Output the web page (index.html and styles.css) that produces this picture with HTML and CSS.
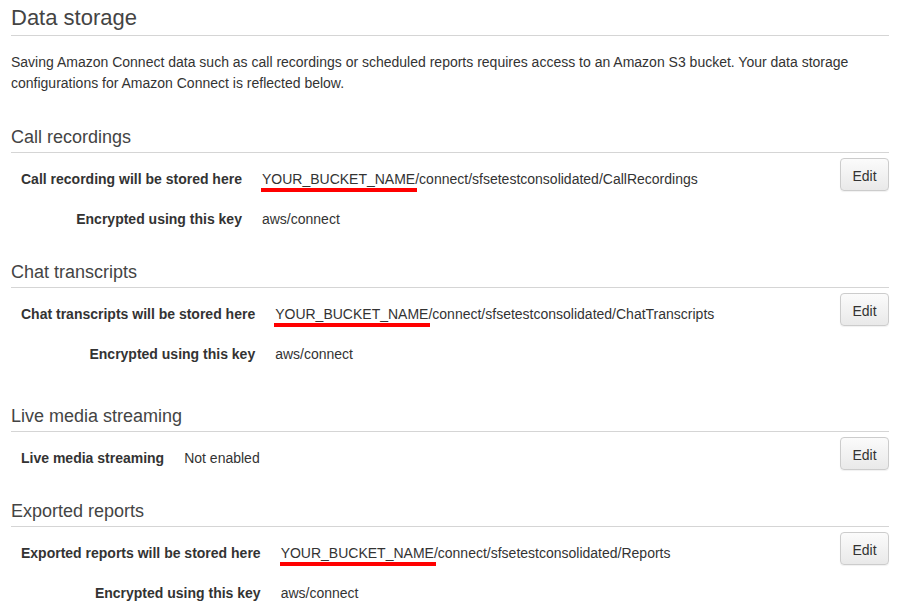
FILE: index.html
```html
<!DOCTYPE html>
<html lang="en">
<head>
<meta charset="utf-8">
<title>Data storage</title>
<link rel="stylesheet" href="styles.css">
</head>
<body>
<main class="page">
  <h1 class="page-title">Data storage</h1>
  <p class="intro">Saving Amazon Connect data such as call recordings or scheduled reports requires access to an Amazon S3 bucket. Your data storage configurations for Amazon Connect is reflected below.</p>

  <section class="section">
    <h2 class="section-title">Call recordings</h2>
    <div class="section-body">
      <div class="fields">
        <div class="label">Call recording will be stored here</div>
        <div class="value"><span class="mark">YOUR_BUCKET_NAME</span>/connect/sfsetestconsolidated/CallRecordings</div>
        <div class="label">Encrypted using this key</div>
        <div class="value">aws/connect</div>
      </div>
      <button class="btn" type="button">Edit</button>
    </div>
  </section>

  <section class="section section-spaced">
    <h2 class="section-title">Chat transcripts</h2>
    <div class="section-body">
      <div class="fields">
        <div class="label">Chat transcripts will be stored here</div>
        <div class="value"><span class="mark">YOUR_BUCKET_NAME</span>/connect/sfsetestconsolidated/ChatTranscripts</div>
        <div class="label">Encrypted using this key</div>
        <div class="value">aws/connect</div>
      </div>
      <button class="btn" type="button">Edit</button>
    </div>
  </section>

  <section class="section">
    <h2 class="section-title">Live media streaming</h2>
    <div class="section-body">
      <div class="fields">
        <div class="label">Live media streaming</div>
        <div class="value">Not enabled</div>
      </div>
      <button class="btn" type="button">Edit</button>
    </div>
  </section>

  <section class="section">
    <h2 class="section-title">Exported reports</h2>
    <div class="section-body">
      <div class="fields">
        <div class="label">Exported reports will be stored here</div>
        <div class="value"><span class="mark">YOUR_BUCKET_NAME</span>/connect/sfsetestconsolidated/Reports</div>
        <div class="label">Encrypted using this key</div>
        <div class="value">aws/connect</div>
      </div>
      <button class="btn" type="button">Edit</button>
    </div>
  </section>
</main>
</body>
</html>
```
FILE: styles.css
```css
html, body {
  margin: 0;
  padding: 0;
  background: #ffffff;
}

body {
  font-family: "Liberation Sans", Arial, Helvetica, sans-serif;
  color: #333333;
  font-size: 14px;
}

.page {
  padding: 0 18px 0 11px;
}

.page-title {
  margin: 4px 0 0;
  padding: 1px 0 4px;
  font-size: 22px;
  line-height: 26px;
  font-weight: normal;
  color: #444444;
  border-bottom: 1px solid #d5d5d5;
}

.intro {
  margin: 16px 0 0;
  font-size: 14px;
  line-height: 21px;
  color: #333333;
}

.section {
  margin-top: 21px;
}

.intro + .section {
  margin-top: 31px;
}

.section-spaced {
  padding-bottom: 9px;
}

.section-title {
  margin: 0;
  padding: 1px 0 4px;
  font-size: 18px;
  line-height: 22px;
  font-weight: normal;
  color: #444444;
  border-bottom: 1px solid #d5d5d5;
}

.section-body {
  display: flex;
  align-items: flex-start;
  justify-content: space-between;
  padding-top: 5px;
}

.fields {
  display: grid;
  grid-template-columns: auto auto;
  grid-auto-rows: 40px;
  line-height: 40px;
  padding-top: 1px;
}

.label {
  font-weight: bold;
  text-align: right;
  padding: 0 20px 0 10px;
  color: #333333;
  white-space: nowrap;
}

.value {
  color: #333333;
  white-space: nowrap;
}

.mark {
  position: relative;
}

.mark::after {
  content: "";
  position: absolute;
  left: -1px;
  right: -2px;
  bottom: -5px;
  height: 4px;
  background: #ff0000;
}

.btn {
  width: 49px;
  height: 33px;
  padding: 2px 0 0;
  font-family: inherit;
  font-size: 14px;
  color: #333333;
  background: linear-gradient(#fbfbfb, #e9e9e9);
  border: 1px solid #cccccc;
  border-radius: 4px;
  box-shadow: 0 1px 1px rgba(0, 0, 0, 0.06);
}
```
